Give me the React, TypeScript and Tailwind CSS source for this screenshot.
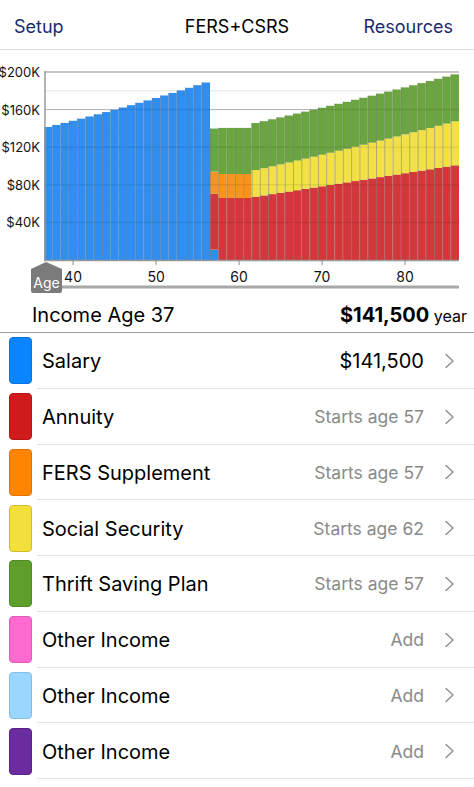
import React from "react";

const SCALE = 0.94; // px per $1K
const X0 = 44; // left edge of age 37 bar
const BAR = 8.3; // width of one year
const BASE = 210; // $0 line in svg coords
const FONT = { fontFamily: "Inter, 'Noto Sans', sans-serif" };

type Seg = { value: number; color: string };

const C = {
  salary: "#2f8ef0",
  annuity: "#d4373a",
  supplement: "#f7941e",
  ss: "#f2e046",
  tsp: "#6ba53f",
};

// stacked values (in $K) for ages 37..86
function yearData(age: number): Seg[] {
  if (age <= 56) {
    return [{ value: 141.5 * Math.pow(1.0153, age - 37), color: C.salary }];
  }
  if (age === 57) {
    return [
      { value: 11, color: C.salary },
      { value: 59.6, color: C.annuity },
      { value: 23.4, color: C.supplement },
      { value: 45.7, color: C.tsp },
    ];
  }
  if (age <= 61) {
    return [
      { value: 66, color: C.annuity },
      { value: 25.5, color: C.supplement },
      { value: 49, color: C.tsp },
    ];
  }
  return [
    { value: 67.3 + (33.4 * (age - 62)) / 24, color: C.annuity },
    { value: 28.4 * Math.pow(1.021, age - 62), color: C.ss },
    { value: 50, color: C.tsp },
  ];
}

const ages = Array.from({ length: 50 }, (_, i) => 37 + i);

function Chart() {
  const y = (k: number) => BASE - k * SCALE;
  const right = X0 + ages.length * BAR;
  const tickX = (a: number) => X0 + (a - 37 + 0.5) * BAR;

  return (
    <svg width={474} height={248} className="block" style={FONT}>
      {/* minor grid */}
      {[20, 60, 100, 140, 180].map((k) => (
        <line key={k} x1={45} x2={right} y1={y(k)} y2={y(k)} stroke="#e4e4e4" strokeWidth={1} />
      ))}
      {[40, 80, 120, 160].map((k) => (
        <line key={k} x1={45} x2={right} y1={y(k)} y2={y(k)} stroke="#c4c4c4" strokeWidth={1} />
      ))}
      <line x1={45} x2={right} y1={y(200)} y2={y(200)} stroke="#b5b5b5" strokeWidth={1.5} />

      {/* bars */}
      {ages.map((a, i) => {
        const x = X0 + i * BAR;
        let acc = 0;
        const segs = yearData(a);
        const total = segs.reduce((s, g) => s + g.value, 0);
        return (
          <g key={a}>
            {segs.map((s, j) => {
              const top = y(acc + s.value);
              const h = s.value * SCALE;
              acc += s.value;
              return <rect key={j} x={x} y={top} width={BAR} height={h} fill={s.color} />;
            })}
            <line x1={x + 0.5} x2={x + 0.5} y1={y(total)} y2={BASE} stroke="#7d7d7d" strokeOpacity={0.55} strokeWidth={1} />
          </g>
        );
      })}

      {/* grid over bars */}
      {[40, 80, 120, 160].map((k) => (
        <line key={k} x1={45} x2={right} y1={y(k)} y2={y(k)} stroke="#000" strokeOpacity={0.1} strokeWidth={1} />
      ))}

      {/* axes */}
      <line x1={45} x2={45} y1={y(200) - 1} y2={BASE} stroke="#9a9a9a" strokeWidth={1.5} />
      <line x1={44} x2={right} y1={BASE + 0.5} y2={BASE + 0.5} stroke="#9a9a9a" strokeWidth={1.5} />
      {[40, 50, 60, 70, 80].map((a) => (
        <g key={a}>
          <line x1={tickX(a)} x2={tickX(a)} y1={BASE} y2={BASE + 5} stroke="#8a8a8a" strokeWidth={1} />
          <text x={tickX(a)} y={232} textAnchor="middle" fontSize={14} fill="#111">
            {a}
          </text>
        </g>
      ))}
      {[40, 80, 120, 160, 200].map((k) => (
        <text key={k} x={40} y={y(k) + 5} textAnchor="end" fontSize={13} fill="#111">
          ${k}K
        </text>
      ))}

      {/* age slider */}
      <line x1={60} x2={right} y1={237} y2={237} stroke="#a8a8a8" strokeWidth={3} />
      <path d="M46 212 L62 219 L62 241 Q62 243 60 243 L33 243 Q31 243 31 241 L31 219 Z" fill="#7b7b7b" />
      <text x={46.5} y={238} textAnchor="middle" fontSize={14} fill="#fff">
        Age
      </text>
    </svg>
  );
}

const rows = [
  { name: "Salary", value: "$141,500", dark: true, color: "bg-[#0a84ff]", border: "border-[#0a74e0]" },
  { name: "Annuity", value: "Starts age 57", color: "bg-[#cf1b1b]", border: "border-[#b41616]" },
  { name: "FERS Supplement", value: "Starts age 57", color: "bg-[#ff8500]", border: "border-[#e07400]" },
  { name: "Social Security", value: "Starts age 62", color: "bg-[#f4e03a]", border: "border-[#cfbd30]" },
  { name: "Thrift Saving Plan", value: "Starts age 57", color: "bg-[#5e9f2c]", border: "border-[#4f8a24]" },
  { name: "Other Income", value: "Add", color: "bg-[#fd6ad0]", border: "border-[#e15bb8]" },
  { name: "Other Income", value: "Add", color: "bg-[#9ad6ff]", border: "border-[#82bde6]" },
  { name: "Other Income", value: "Add", color: "bg-[#6a2c9e]", border: "border-[#5a2388]" },
];

function Chevron() {
  return (
    <svg width={11} height={16} viewBox="0 0 11 16" className="shrink-0">
      <path d="M2 1.5 L9 8 L2 14.5" fill="none" stroke="#8e8e8e" strokeWidth={1.4} strokeLinecap="round" strokeLinejoin="round" />
    </svg>
  );
}

export default function App() {
  return (
    <div className="w-[474px] h-[787px] bg-white overflow-hidden text-black" style={FONT}>
      {/* nav */}
      <div className="relative h-[50px] border-b border-[#dcdcdc] flex items-center justify-between pl-[14px] pr-[21px] pt-[3px] text-[18px]">
        <span className="text-[#1b2a6e]">Setup</span>
        <span className="absolute left-0 right-0 text-center pointer-events-none">FERS+CSRS</span>
        <span className="text-[#1b2a6e]">Resources</span>
      </div>

      <Chart />

      {/* total */}
      <div className="h-[35px] border-b border-[#a0a0a0] flex items-start justify-between pl-[32px] pr-[7px]">
        <span className="text-[20px] leading-[35px]">Income Age 37</span>
        <span className="leading-[35px]">
          <span className="text-[20px] font-bold">$141,500</span>
          <span className="text-[16px]"> year</span>
        </span>
      </div>

      {/* sources */}
      <div>
        {rows.map((r, i) => (
          <div key={i} className="h-[55.75px] flex items-center relative">
            <div className={`ml-[9px] w-[23px] h-[47px] rounded-[4px] border ${r.color} ${r.border}`} />
            <span className="ml-[10px] text-[20px] flex-1 pt-[1px]">{r.name}</span>
            <span className={`mr-[20px] pt-[1px] ${r.dark ? "text-black text-[20px]" : "text-[#8a8a8a] text-[17.5px]"}`}>{r.value}</span>
            <div className="mr-[19px]">
              <Chevron />
            </div>
            <div className="absolute left-[37px] right-0 bottom-0 h-px bg-[#e3e3e3]" />
          </div>
        ))}
      </div>
    </div>
  );
}
